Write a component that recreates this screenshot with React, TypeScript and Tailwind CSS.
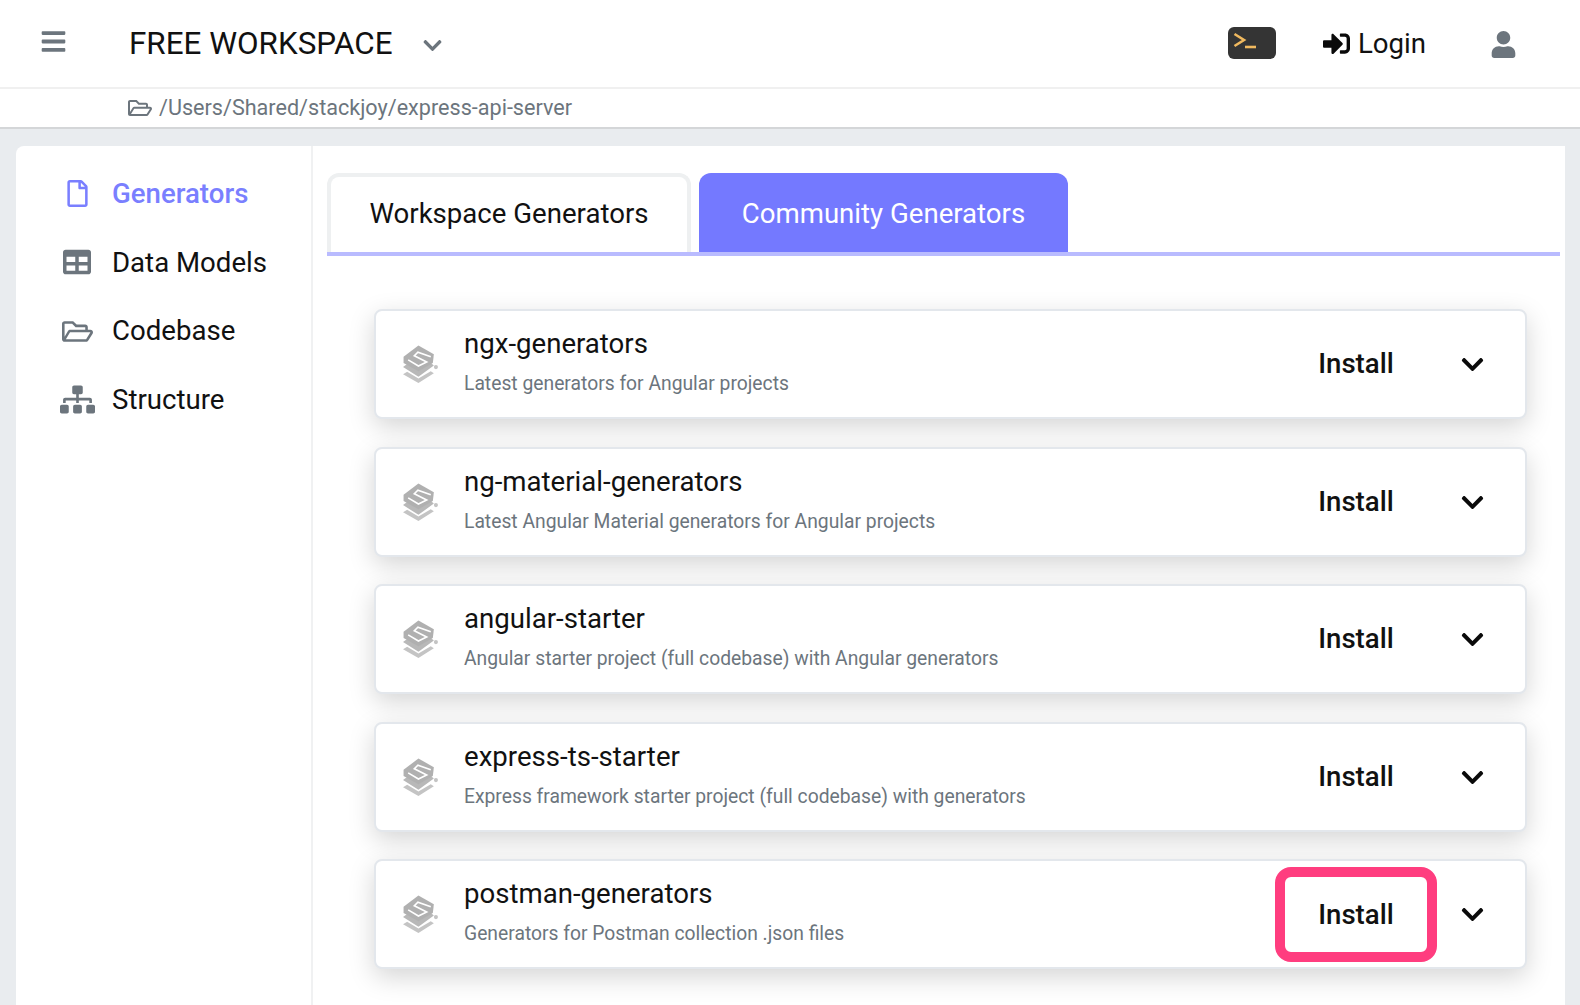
import { FaBars, FaChevronDown, FaRegFile, FaRegFolderOpen, FaSignInAlt, FaSitemap, FaTable, FaUser } from 'react-icons/fa'

const generators = [
  { name: 'ngx-generators', description: 'Latest generators for Angular projects' },
  { name: 'ng-material-generators', description: 'Latest Angular Material generators for Angular projects' },
  { name: 'angular-starter', description: 'Angular starter project (full codebase) with Angular generators' },
  { name: 'express-ts-starter', description: 'Express framework starter project (full codebase) with generators' },
  { name: 'postman-generators', description: 'Generators for Postman collection .json files', highlight: true },
]

const StackIcon = () => (
  <svg width="37" height="42" viewBox="0 0 36 40" className="shrink-0">
    <path d="M1 30 L5 27.5 L16 34 L28 27 L31 29 L16 38.5 Z" fill="#c4c4c4" />
    <path d="M1 23 L5 20 L16 26 L28 19 L31 21.5 L16 32.5 Z" fill="#b8b8b8" />
    <path d="M1.5 13 L16 2 L31 10.5 L30 19 L16 27 L1.5 19 Z" fill="#b0b0b0" />
    <path d="M28 13 L15.5 8.5 L12 12 L24 18 L16 22 L6 16" fill="none" stroke="#ffffff" strokeWidth="1.6" />
    <circle cx="33" cy="23" r="2" fill="#c4c4c4" />
  </svg>
)

const navItems = [
  { label: 'Generators', icon: <FaRegFile className="text-[27px] text-[#7a7fff]" />, active: true },
  { label: 'Data Models', icon: <FaTable className="text-[28px] text-[#6c757d]" /> },
  { label: 'Codebase', icon: <FaRegFolderOpen className="text-[31px] text-[#6c757d]" /> },
  { label: 'Structure', icon: <FaSitemap className="text-[35px] text-[#6c757d]" /> },
]

export default function App() {
  return (
    <div className="flex h-[1005px] w-[1580px] flex-col overflow-hidden bg-[#e9ecef] font-['Roboto',sans-serif] text-[#111]">
      {/* top bar */}
      <header className="flex h-[89px] shrink-0 items-center border-b-2 border-[#f0f0f0] bg-white">
        <FaBars className="ml-[40px] mb-[4px] text-[27px] text-[#6c757d]" />
        <h1 className="ml-[62px] text-[31.4px] leading-none font-normal">FREE WORKSPACE</h1>
        <FaChevronDown className="ml-[29px] mt-[3px] text-[21px] text-[#6c757d]" />
        <div className="ml-auto flex items-center">
          <div className="mb-[2px] flex h-[32px] w-[48px] items-start rounded-[6px] bg-[#343434] pl-[5px] pt-[5px]">
            <svg width="26" height="20" viewBox="0 0 26 20" fill="none" stroke="#f0b95f" strokeWidth="2.6">
              <path d="M1.5 2 L11 8 L1.5 14" />
              <path d="M12 15 H23" />
            </svg>
          </div>
          <div className="ml-[47px] flex items-center gap-[8px] text-[27.6px] leading-none">
            <FaSignInAlt className="text-[27px] text-[#0a0a0a]" />
            <span>Login</span>
          </div>
          <FaUser className="ml-[64px] mr-[63px] mt-[2px] text-[27px] text-[#6c757d]" />
        </div>
      </header>

      {/* path bar */}
      <div className="flex h-[40px] shrink-0 items-center border-b-2 border-[#d4d6d8] bg-white pl-[128px] text-[21.6px] text-[#6c757d]">
        <FaRegFolderOpen className="text-[24px]" />
        <span className="ml-[7px]">/Users/Shared/stackjoy/express-api-server</span>
      </div>

      <main className="ml-[16px] mr-[15px] mt-[17px] flex min-h-0 flex-1 rounded-tl-[8px] bg-white">
        {/* sidebar */}
        <nav className="flex w-[297px] shrink-0 flex-col gap-[27.8px] border-r-2 border-[#f0f1f2] pt-[27px]">
          {navItems.map((item) => (
            <div key={item.label} className="flex h-[41px] items-center text-[27.6px] leading-none">
              <span className="flex w-[96px] shrink-0 justify-center pl-[26px]">{item.icon}</span>
              <span className={item.active ? 'font-medium text-[#7a7fff]' : ''}>{item.label}</span>
            </div>
          ))}
        </nav>

        {/* content */}
        <section className="min-w-0 flex-1 pl-[14px] pr-[5px] pt-[27px]">
          <div className="flex h-[83px] items-end gap-[8px] border-b-[4px] border-[#b9bbff]">
            <button className="flex h-[79px] w-[364px] items-center justify-center rounded-t-[12px] border-x-4 border-t-4 border-[#eef0f1] bg-white pb-[2px] text-[27.6px]">
              Workspace Generators
            </button>
            <button className="flex h-[79px] w-[369px] items-center justify-center rounded-t-[12px] bg-[#7479ff] pt-[2px] text-[27.6px] text-white">
              Community Generators
            </button>
          </div>

          <div className="ml-[47px] mr-[33px] mt-[53px] flex flex-col gap-[27.6px]">
            {generators.map((g) => (
              <div
                key={g.name}
                className="flex h-[110px] items-center rounded-[8px] border-2 border-[#e3e7ec] bg-white shadow-[0_8px_26px_rgba(0,0,0,0.17)]"
              >
                <div className="ml-[26px]">
                  <StackIcon />
                </div>
                <div className="ml-[25px] min-w-0 flex-1 pb-[4px]">
                  <div className="text-[27.6px] leading-[36px]">{g.name}</div>
                  <div className="mt-[8px] text-[19.3px] leading-[28px] text-[#6c757d]">{g.description}</div>
                </div>
                <div
                  className={
                    'flex h-[95px] w-[162px] items-center justify-center rounded-[16px] border-[10px] text-[27.6px] font-medium ' +
                    (g.highlight ? 'border-[#ff3d7f]' : 'border-transparent')
                  }
                >
                  Install
                </div>
                <FaChevronDown className="ml-[23px] mr-[40px] mt-[1px] text-[25px] text-[#0a0a0a]" />
              </div>
            ))}
          </div>
        </section>
      </main>
    </div>
  )
}
